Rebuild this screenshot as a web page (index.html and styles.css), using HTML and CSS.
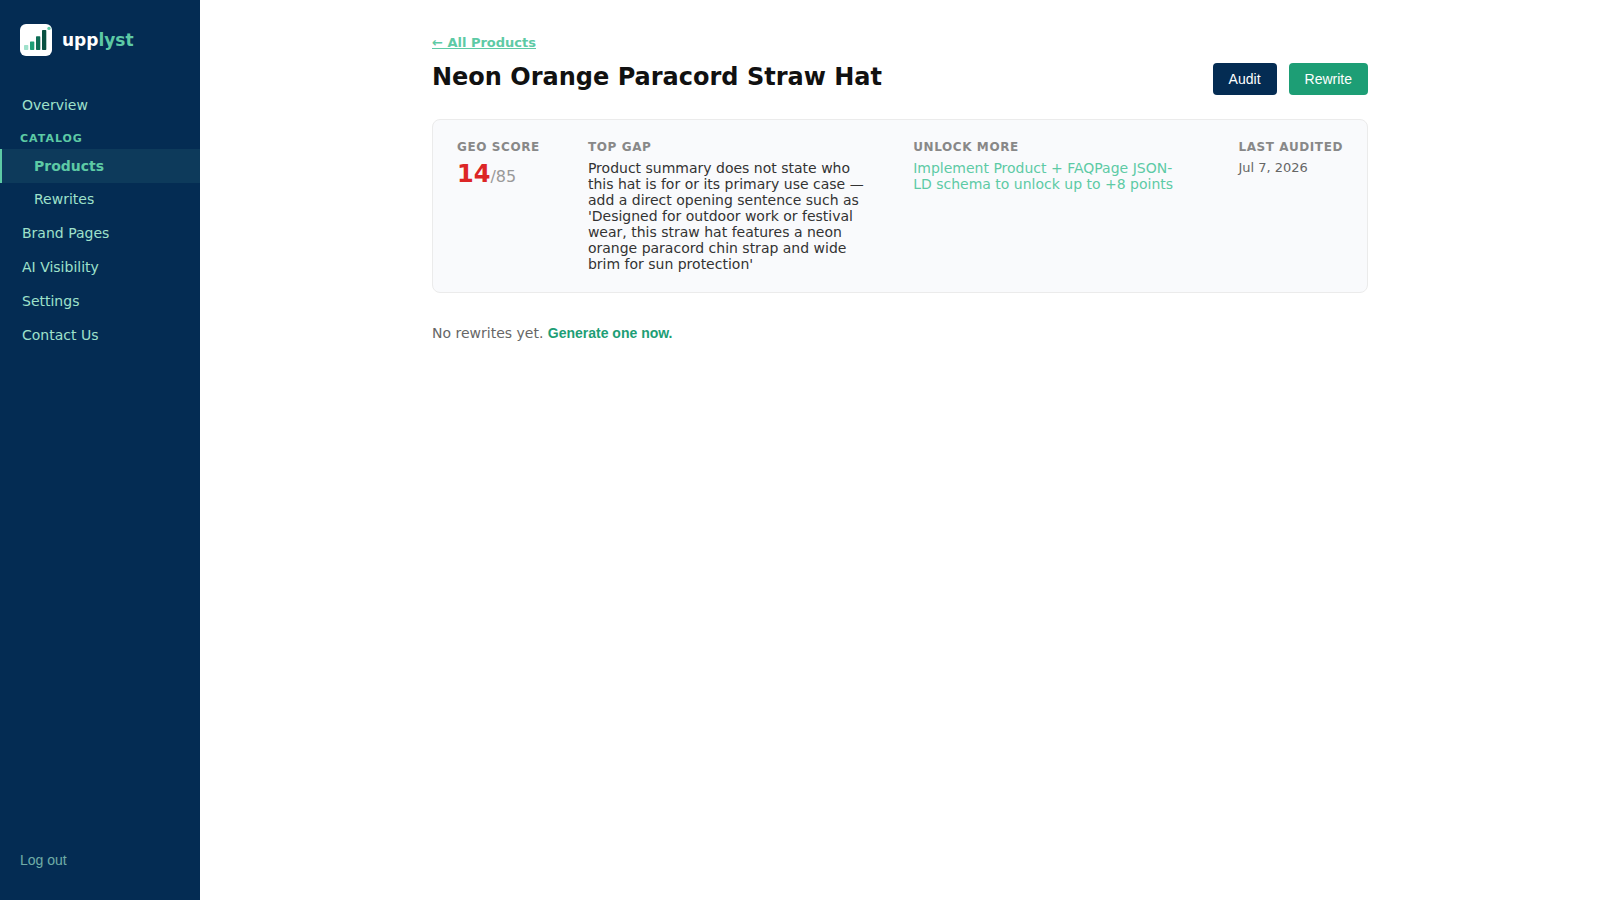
FILE: index.html
```html
<!DOCTYPE html>
<html lang="en">
<head>
<meta charset="utf-8">
<meta name="viewport" content="width=device-width, initial-scale=1">
<title>Neon Orange Paracord Straw Hat – upplyst</title>
<link rel="stylesheet" href="styles.css">
</head>
<body>
<div class="app">
  <aside class="sidebar">
    <div class="brand">
      <svg class="brand-mark" viewBox="0 0 32 32" aria-hidden="true">
        <rect width="32" height="32" rx="6" fill="#ffffff"/>
        <rect x="4" y="21" width="4.3" height="5" rx="0.7" fill="#9fe1cb"/>
        <rect x="10" y="17.4" width="4.3" height="8.6" rx="0.7" fill="#1d9e75"/>
        <rect x="16" y="12.2" width="4.3" height="13.8" rx="0.7" fill="#0f6e56"/>
        <rect x="22" y="6" width="4.3" height="20" rx="0.7" fill="#085041"/>
        <circle cx="29" cy="4.4" r="1.7" fill="#5dcaa5"/>
      </svg>
      <span class="brand-name">upp<span class="brand-accent">lyst</span></span>
    </div>
    <nav class="nav">
      <a class="nav-link" href="#">Overview</a>
      <div class="nav-heading">CATALOG</div>
      <a class="nav-link nav-sub nav-active" href="#" aria-current="page">Products</a>
      <a class="nav-link nav-sub" href="#">Rewrites</a>
      <a class="nav-link" href="#">Brand Pages</a>
      <a class="nav-link" href="#">AI Visibility</a>
      <a class="nav-link" href="#">Settings</a>
      <a class="nav-link" href="#">Contact Us</a>
    </nav>
    <button class="logout" type="button">Log out</button>
  </aside>
  <main class="main">
    <div class="content">
      <a class="back" href="#">← All Products</a>
      <header class="header">
        <h1 class="title">Neon Orange Paracord Straw Hat</h1>
        <div class="actions">
          <button class="button" type="button">Audit</button>
          <button class="button button-green" type="button">Rewrite</button>
        </div>
      </header>
      <section class="card">
        <div class="fact">
          <h2 class="label">GEO SCORE</h2>
          <div class="score"><strong class="score-value">14</strong><span class="score-max">/85</span></div>
        </div>
        <div class="fact fact-wide">
          <h2 class="label">TOP GAP</h2>
          <p class="text">Product summary does not state who this hat is for or its primary use case — add a direct opening sentence such as 'Designed for outdoor work or festival wear, this straw hat features a neon orange paracord chin strap and wide brim for sun protection'</p>
        </div>
        <div class="fact fact-wide">
          <h2 class="label">UNLOCK MORE</h2>
          <p class="text text-accent">Implement Product + FAQPage JSON-LD schema to unlock up to +8 points</p>
        </div>
        <div class="fact">
          <h2 class="label">LAST AUDITED</h2>
          <p class="date">Jul 7, 2026</p>
        </div>
      </section>
      <p class="empty">No rewrites yet. <button class="generate" type="button">Generate one now.</button></p>
    </div>
  </main>
</div>
</body>
</html>
```
FILE: styles.css
```css
* { box-sizing: border-box; }
body {
  margin: 0;
  font-family: "DejaVu Sans", sans-serif;
  font-size: 14px;
  color: #111111;
  background: #ffffff;
}
h1, h2, p { margin: 0; }
button { font-family: "Liberation Sans", Arial, sans-serif; font-size: 14px; line-height: 16px; border: 0; cursor: pointer; }
.app { display: flex; min-height: 100vh; }

.sidebar {
  display: flex;
  flex-direction: column;
  flex: 0 0 200px;
  padding: 24px 0;
  background: #042c53;
}
.brand { display: flex; align-items: center; gap: 10px; padding: 0 20px; margin-bottom: 32px; }
.brand-mark { width: 32px; height: 32px; }
.brand-name { font-size: 17px; font-weight: 700; color: #ffffff; }
.brand-accent { color: #5dcaa5; }
.nav { display: flex; flex-direction: column; }
.nav-link {
  padding: 8px 20px;
  border-left: 2px solid transparent;
  font-size: 14px;
  line-height: 18px;
  color: #9fe1cb;
  text-decoration: none;
}
.nav-heading {
  padding: 10px 20px 4px;
  font-size: 11px;
  line-height: 13px;
  font-weight: 700;
  letter-spacing: 1px;
  color: #5dcaa5;
}
.nav-sub { padding-left: 32px; line-height: 17px; }
.nav-active { border-left-color: #5dcaa5; background: #0d3a5b; font-weight: 700; line-height: 18px; color: #5dcaa5; }
.logout { margin-top: auto; padding: 8px 20px; background: none; text-align: left; color: #9fe1cb; opacity: 0.7; }

.main { flex: 1; min-width: 0; }
.content { max-width: 1000px; margin: 0 auto; padding: 32px; }
.back { display: inline-block; font-size: 13px; line-height: 22px; font-weight: 700; color: #5dcaa5; }
.header { display: flex; align-items: flex-start; justify-content: space-between; gap: 16px; margin: 9px 0 24px; }
.title { font-size: 24px; line-height: 28px; font-weight: 700; }
.actions { display: flex; gap: 12px; }
.button { padding: 8px 16px; border-radius: 4px; background: #042c53; color: #ffffff; }
.button-green { background: #1d9e75; }

.card {
  display: flex;
  gap: 48px;
  padding: 20px 24px;
  border: 1px solid #ebebeb;
  border-radius: 8px;
  background: #f9fafc;
}
.fact-wide { flex: 1; min-width: 0; }
.label { margin-bottom: 6px; font-size: 12px; line-height: 14px; font-weight: 700; letter-spacing: 0.05em; color: #888888; white-space: nowrap; }
.score { line-height: 28px; }
.score-value { font-size: 24px; color: #dc2626; }
.score-max { font-size: 16px; color: #999999; }
.text { line-height: 16px; color: #333333; }
.text-accent { color: #5dcaa5; }
.date { font-size: 13px; line-height: 16px; color: #666666; white-space: nowrap; }
.empty { margin-top: 32px; line-height: 16px; color: #666666; }
.generate { padding: 0; background: none; font-weight: 700; color: #1d9e75; }
```
